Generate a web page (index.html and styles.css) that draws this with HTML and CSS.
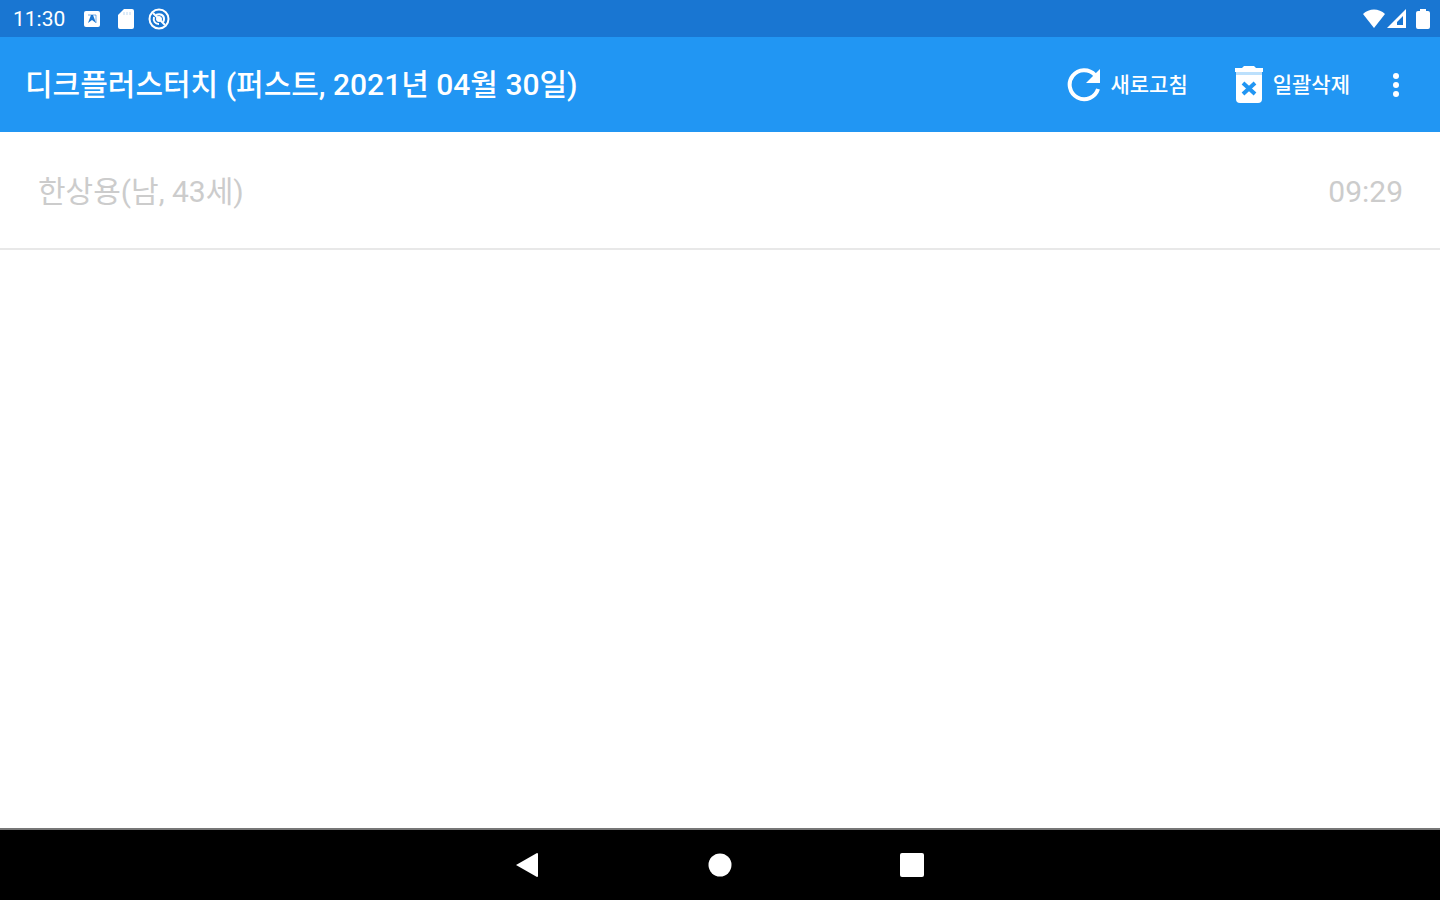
FILE: index.html
```
<!DOCTYPE html>
<html lang="ko">
<head>
  <meta charset="UTF-8">
  <meta name="viewport" content="width=device-width, initial-scale=1">
  <title>디크플러스터치</title>
  <link rel="stylesheet" href="styles.css">
</head>
<body>

  <!-- Status bar -->
  <div class="status-bar">
    <div class="status-left">
      <span class="clock">11:30</span>
      <svg width="16" height="18" viewBox="0 0 16 18">
        <rect y="1" width="16" height="16" rx="2" fill="#fff"/>
        <path d="M4 13l3-8h2l3 8-4-3z" fill="#1976d2"/>
        <path d="M4 5h8v8" fill="none" stroke="#1976d2" stroke-opacity=".6"/>
      </svg>
      <svg class="sd-card" width="16" height="20" viewBox="0 0 16 20">
        <path d="M6 0h8a2 2 0 0 1 2 2v16a2 2 0 0 1-2 2H2a2 2 0 0 1-2-2V6z" fill="#fff"/>
        <path d="M6 3v3M9 3v3M12 3v3" stroke="#1976d2" stroke-opacity=".3"/>
      </svg>
      <svg width="22" height="22" viewBox="0 0 22 22" fill="none" stroke="#fff">
        <circle cx="11" cy="11" r="9.500" stroke-width="2"/>
        <path d="M5 5l12 12" stroke-width="2"/>
        <path d="M8 7c4-2 8 0 8 4 0 2-1 3-1 3M6 9c-1 4 1 7 5 7" stroke-width="2"/>
        <circle cx="11" cy="11" r="2.500" fill="#fff"/>
      </svg>
    </div>
    <div class="status-right">
      <svg width="24" height="20" viewBox="0 0 24 20">
        <path d="M1 5C7-1 17-1 23 5L12 19z" fill="#fff"/>
      </svg>
      <svg width="20" height="20" viewBox="0 0 20 20">
        <path d="M0 19L19 0v19zM10 16h6V7l-6 6z" fill="#fff" fill-rule="evenodd"/>
      </svg>
      <svg class="battery" width="14" height="20" viewBox="0 0 14 20">
        <path d="M4 0h6v2h2a2 2 0 0 1 2 2v14a2 2 0 0 1-2 2H2a2 2 0 0 1-2-2V4a2 2 0 0 1 2-2h2z" fill="#fff"/>
      </svg>
    </div>
  </div>

  <!-- App bar -->
  <header class="app-bar">
    <h1>디크플러스터치 (퍼스트, 2021년 04월 30일)</h1>
    <div class="actions">
      <button class="action" type="button">
        <svg width="34" height="34" viewBox="0 0 34 34">
          <path d="M28 7A14.500 14.500 0 1 0 31 21" fill="none" stroke="#fff" stroke-width="4"/>
          <path d="M33 1v14H19z" fill="#fff"/>
        </svg>
        <span>새로고침</span>
      </button>
      <button class="action" type="button">
        <svg width="30" height="38" viewBox="0 0 30 38">
          <path d="M10 0h10l2 2h7v4H1V2h7z" fill="#fff"/>
          <path d="M2 6h26v3H2z" fill="#fff" fill-opacity=".7"/>
          <path d="M2 9h26v24a4 4 0 0 1-4 4H6a4 4 0 0 1-4-4z" fill="#fff"/>
          <path d="M9 17l12 11M21 17L9 28" stroke="#2196f3" stroke-width="4"/>
        </svg>
        <span>일괄삭제</span>
      </button>
      <button class="more" type="button" aria-label="더보기">
        <svg width="8" height="26" viewBox="0 0 8 26" fill="#fff">
          <circle cx="4" cy="4" r="3"/>
          <circle cx="4" cy="13" r="3"/>
          <circle cx="4" cy="22" r="3"/>
        </svg>
      </button>
    </div>
  </header>

  <!-- Patient list -->
  <main>
    <ul class="patients">
      <li>
        <span>한상용(남, 43세)</span>
        <time>09:29</time>
      </li>
    </ul>
  </main>

  <!-- Navigation bar -->
  <nav class="nav-bar">
    <button type="button" aria-label="뒤로">
      <svg width="24" height="26" viewBox="0 0 24 26"><path d="M0 13L21 1q1 0 1 1v22q0 1-1 1z" fill="#fff"/></svg>
    </button>
    <button type="button" aria-label="홈">
      <svg width="24" height="24" viewBox="0 0 24 24"><circle cx="12" cy="12" r="11.500" fill="#fff"/></svg>
    </button>
    <button type="button" aria-label="최근 앱">
      <svg width="24" height="24" viewBox="0 0 24 24"><rect width="24" height="24" rx="2" fill="#fff"/></svg>
    </button>
  </nav>

</body>
</html>
```
FILE: styles.css
```
* {
  box-sizing: border-box;
}

body {
  margin: 0;
  min-height: 100vh;
  display: flex;
  flex-direction: column;
  font-family: Roboto, "Noto Sans CJK KR", sans-serif;
  background-color: #fff;
}

svg {
  display: block;
  flex: none;
}

button {
  padding: 0;
  border: none;
  background: none;
  color: inherit;
  font: inherit;
  cursor: pointer;
}

.status-bar {
  display: flex;
  justify-content: space-between;
  align-items: center;
  height: 37px;
  padding: 0 10px 0 13px;
  background-color: #1976d2;
  color: #fff;
}

.status-left {
  display: flex;
  align-items: center;
  gap: 14px;
}

.clock {
  margin-right: 5px;
  font-size: 21px;
}

.sd-card {
  margin-left: 4px;
}

.status-right {
  display: flex;
  align-items: center;
  gap: 1px;
}

.battery {
  margin-left: 8px;
}

.app-bar {
  display: flex;
  justify-content: space-between;
  align-items: center;
  height: 95px;
  padding: 0 40px 0 25px;
  background-color: #2196f3;
  color: #fff;
}

.app-bar h1 {
  margin: 0;
  font-size: 30px;
  font-weight: 500;
  line-height: 36px;
  white-space: nowrap;
}

.actions {
  display: flex;
  align-items: center;
  gap: 42px;
}

.action {
  display: flex;
  align-items: center;
  gap: 9px;
  font-size: 21px;
  font-weight: 500;
  line-height: 24px;
  white-space: nowrap;
}

.action + .action {
  margin-left: 4px;
}

main {
  flex: 1;
}

.patients {
  margin: 0;
  padding: 0;
  list-style: none;
}

.patients li {
  display: flex;
  justify-content: space-between;
  align-items: center;
  height: 118px;
  padding: 4px 37px 0 38px;
  border-bottom: 2px solid #e8e8e8;
  color: #ccc;
  font-size: 30px;
  line-height: 36px;
}

.nav-bar {
  display: flex;
  justify-content: center;
  align-items: center;
  gap: 168px;
  height: 72px;
  border-top: 2px solid #777;
  background-color: #000;
}
```
